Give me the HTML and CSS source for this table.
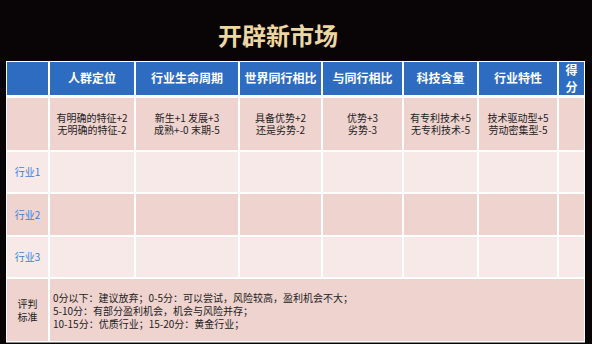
FILE: index.html
```html
<!DOCTYPE html>
<html lang="zh-CN">
<head>
<meta charset="utf-8">
<title>开辟新市场</title>
<link rel="stylesheet" href="styles.css">
</head>
<body>
<div class="page">
  <h1 class="title">开辟新市场</h1>
  <table class="grid">
    <colgroup>
      <col class="c1"><col class="c2"><col class="c3"><col class="c4"><col class="c5"><col class="c6"><col class="c7"><col class="c8">
    </colgroup>
    <thead>
      <tr>
        <th></th>
        <th>人群定位</th>
        <th>行业生命周期</th>
        <th>世界同行相比</th>
        <th>与同行相比</th>
        <th>科技含量</th>
        <th>行业特性</th>
        <th>得<br>分</th>
      </tr>
    </thead>
    <tbody>
      <tr class="row-dark crit">
        <td></td>
        <td>有明确的特征+2<br>无明确的特征-2</td>
        <td>新生+1 发展+3<br>成熟+-0 末期-5</td>
        <td>具备优势+2<br>还是劣势-2</td>
        <td>优势+3<br>劣势-3</td>
        <td>有专利技术+5<br>无专利技术-5</td>
        <td>技术驱动型+5<br>劳动密集型-5</td>
        <td></td>
      </tr>
      <tr class="row-light ind">
        <td class="label">行业1</td><td></td><td></td><td></td><td></td><td></td><td></td><td></td>
      </tr>
      <tr class="row-dark ind mid">
        <td class="label">行业2</td><td></td><td></td><td></td><td></td><td></td><td></td><td></td>
      </tr>
      <tr class="row-light ind">
        <td class="label">行业3</td><td></td><td></td><td></td><td></td><td></td><td></td><td></td>
      </tr>
      <tr class="row-dark note">
        <td class="note-label">评判<br>标准</td>
        <td colspan="7" class="notes">0分以下：建议放弃；0-5分：可以尝试，风险较高，盈利机会不大；<br>5-10分：有部分盈利机会，机会与风险并存；<br>10-15分：优质行业；15-20分：黄金行业；</td>
      </tr>
    </tbody>
  </table>
</div>
</body>
</html>
```

FILE: styles.css
```css
* { box-sizing: border-box; }

html, body {
  margin: 0;
  background: #090405;
}

body {
  width: 592px;
  height: 344px;
  overflow: hidden;
  font-family: "Noto Sans CJK SC", "Noto Sans", sans-serif;
}

.title {
  margin: 0;
  height: 61px;
  padding: 9px 36px 0 0;
  display: flex;
  align-items: center;
  justify-content: center;
  font-size: 24px;
  font-weight: 700;
  line-height: 1;
  color: #ecd7a2;
}

.grid {
  margin-left: 6px;
  width: 579px;
  table-layout: fixed;
  border-collapse: separate;
  border-spacing: 0;
  border: 1px solid #fff;
  box-shadow: 0 1px 0 #8b8b8b;
}

.c1 { width: 43px; }
.c2 { width: 86px; }
.c3 { width: 104px; }
.c4 { width: 83px; }
.c5 { width: 81px; }
.c6 { width: 75px; }
.c7 { width: 80px; }
.c8 { width: 25px; }

.grid th,
.grid td {
  padding: 0;
  border-right: 2px solid #fff;
  border-bottom: 2px solid #fff;
  text-align: center;
  vertical-align: middle;
  color: #222;
  font-size: 10px;
  line-height: 12px;
}

.grid th:last-child,
.grid td:last-child { border-right: 0; }

.grid tbody tr:last-child td { border-bottom: 0; }

.grid thead th {
  height: 35px;
  background: #2d6cc1;
  color: #fff;
  font-size: 12px;
  font-weight: 700;
  line-height: 16.5px;
  border-bottom-width: 3px;
}

.row-dark td { background: #efd3cf; }
.row-light td { background: #f7e9e8; }

.crit td { height: 54px; }
.ind td { height: 42px; }
.ind.mid td { height: 43px; }
.note td { height: 62px; }

.grid .label { color: #3d7dd6; }

.grid .note-label { line-height: 13px; }

.grid .notes {
  text-align: left;
  padding-left: 3px;
  line-height: 13px;
}
```
